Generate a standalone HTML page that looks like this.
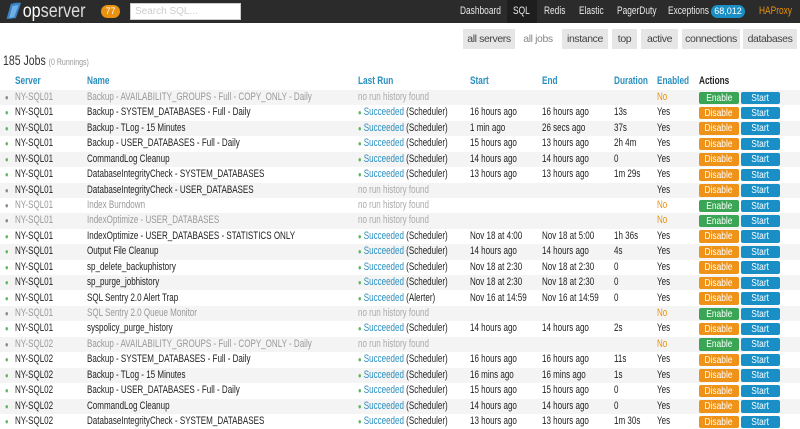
<!DOCTYPE html>
<html><head><meta charset="utf-8"><style>
*{margin:0;padding:0;box-sizing:border-box}
body{width:800px;height:429px;overflow:hidden;background:#fff;font-family:"Liberation Sans",sans-serif;font-size:11px;color:#222;position:relative}
.top{position:absolute;left:0;top:0;width:800px;height:23px;background:#2b2b2b}
.logo{position:absolute;left:4px;top:1px;font-size:19px;color:#dcdcdc;line-height:21px;transform:scaleX(.85);transform-origin:0 0;white-space:nowrap}
.logo b{font-weight:normal;color:#fff}
.badge{position:absolute;left:101px;top:5px;width:19px;height:13px;border-radius:7px;background:#e8920f;color:#fff;font-size:9px;text-align:center;line-height:13px}
.search{position:absolute;left:130px;top:3px;width:111px;height:17px;background:#fff;border:1px solid #ccc;color:#ccc;font-size:10px;padding-left:4px;line-height:15px}
.nav{position:absolute;top:0;height:23px;line-height:23px;color:#e8e8e8;font-size:11px;white-space:nowrap}
.nav i{font-style:normal;display:inline-block;transform:scaleX(.76);transform-origin:0 0}
.sub{position:absolute;top:29px;height:20px;line-height:20px;background:#e6e6e6;color:#444;font-size:10.5px;text-align:center;white-space:nowrap;letter-spacing:-0.4px}
h1{position:absolute;left:3px;top:53px;font-size:13.5px;font-weight:normal;color:#333;transform:scaleX(.78);transform-origin:0 0;white-space:nowrap}
h1 span{font-size:9px;color:#999}
.hd{position:absolute;top:75px;font-weight:bold;color:#2a8fc0;font-size:11px;transform:scaleX(.75);transform-origin:0 0;white-space:nowrap}
.r{position:absolute;left:0;width:800px;height:15.4px;line-height:15.4px;white-space:nowrap}
.g{background:#f4f4f4}
.r span{position:absolute;transform:scaleX(.73);transform-origin:0 0}
.d{left:5px;font-size:8px;color:#888}
.ok{color:#5cb85c}
.s{left:15px}.n{left:87px}.l{left:358px}.st{left:470px}.e{left:542px}.du{left:614px}.en{left:657px}
.dim{color:#999}
.suc{color:#2a8fc0}
.nh{color:#aaa}
.no{color:#e8920f}
.r span.b{top:1.5px;height:12.5px;line-height:12.5px;color:#fff;text-align:center;border-radius:2px;font-size:10.5px;transform:none}
.b i{display:inline-block;transform:scaleX(.8)}
.b1{left:699px;width:40px}
.b2{left:741px;width:39px;background:#1a8fc6}
.dis{background:#ef9318}.ena{background:#3aa655}
.r i{font-style:normal}
</style></head><body>
<div class="top">
<div class="logo"><svg width="22" height="18" viewBox="0 0 22 18" style="vertical-align:-3px"><path d="M3 17 L8 2 Q14 0 20 1 L14 16 Q8 17 3 17Z" fill="#3b82c4"/><path d="M6 16 L10 4 L17 3 L12 15Z" fill="#6fb0e6"/></svg><b>op</b>server</div>
<div class="badge">77</div>
<div class="search">Search SQL...</div>
<div class="nav" style="left:460px"><i>Dashboard</i></div>
<div class="nav" style="left:507px;width:30px;background:#1e1e1e;padding-left:6px"><i>SQL</i></div>
<div class="nav" style="left:544px"><i>Redis</i></div>
<div class="nav" style="left:579px"><i>Elastic</i></div>
<div class="nav" style="left:617px"><i>PagerDuty</i></div>
<div class="nav" style="left:668px"><i>Exceptions</i></div>
<div style="position:absolute;left:711px;top:5px;width:34px;height:13px;border-radius:7px;background:#1a8fc6;color:#fff;font-size:9px;text-align:center;line-height:13px">68,012</div>
<div class="nav" style="left:759px;color:#e8920f"><i>HAProxy</i></div>
</div>
<div class="sub" style="left:463px;width:52px">all servers</div>
<div class="sub" style="left:519px;width:38px;background:#fff;color:#888">all jobs</div>
<div class="sub" style="left:562px;width:46px">instance</div>
<div class="sub" style="left:612px;width:25px">top</div>
<div class="sub" style="left:641px;width:37px">active</div>
<div class="sub" style="left:682px;width:58px">connections</div>
<div class="sub" style="left:743px;width:54px">databases</div>
<h1>185 Jobs <span>(0 Runnings)</span></h1>
<div class="hd" style="left:15px">Server</div>
<div class="hd" style="left:87px">Name</div>
<div class="hd" style="left:358px">Last Run</div>
<div class="hd" style="left:470px">Start</div>
<div class="hd" style="left:542px">End</div>
<div class="hd" style="left:614px">Duration</div>
<div class="hd" style="left:657px">Enabled</div>
<div class="hd" style="left:699px;color:#222">Actions</div>

<div class="r g dim" style="top:90px"><span class="d">●</span><span class="s">NY-SQL01</span><span class="n">Backup - AVAILABILITY_GROUPS - Full - COPY_ONLY - Daily</span><span class="l nh">no run history found</span><span class="en no">No</span><span class="b b1 ena"><i>Enable</i></span><span class="b b2"><i>Start</i></span></div>
<div class="r" style="top:105.4px"><span class="d ok">●</span><span class="s">NY-SQL01</span><span class="n">Backup - SYSTEM_DATABASES - Full - Daily</span><span class="l"><i class="ok" style="font-size:8px">●</i> <i class="suc">Succeeded</i> (Scheduler)</span><span class="st">16 hours ago</span><span class="e">16 hours ago</span><span class="du">13s</span><span class="en">Yes</span><span class="b b1 dis"><i>Disable</i></span><span class="b b2"><i>Start</i></span></div>
<div class="r g" style="top:120.9px"><span class="d ok">●</span><span class="s">NY-SQL01</span><span class="n">Backup - TLog - 15 Minutes</span><span class="l"><i class="ok" style="font-size:8px">●</i> <i class="suc">Succeeded</i> (Scheduler)</span><span class="st">1 min ago</span><span class="e">26 secs ago</span><span class="du">37s</span><span class="en">Yes</span><span class="b b1 dis"><i>Disable</i></span><span class="b b2"><i>Start</i></span></div>
<div class="r" style="top:136.3px"><span class="d ok">●</span><span class="s">NY-SQL01</span><span class="n">Backup - USER_DATABASES - Full - Daily</span><span class="l"><i class="ok" style="font-size:8px">●</i> <i class="suc">Succeeded</i> (Scheduler)</span><span class="st">15 hours ago</span><span class="e">13 hours ago</span><span class="du">2h 4m</span><span class="en">Yes</span><span class="b b1 dis"><i>Disable</i></span><span class="b b2"><i>Start</i></span></div>
<div class="r g" style="top:151.7px"><span class="d ok">●</span><span class="s">NY-SQL01</span><span class="n">CommandLog Cleanup</span><span class="l"><i class="ok" style="font-size:8px">●</i> <i class="suc">Succeeded</i> (Scheduler)</span><span class="st">14 hours ago</span><span class="e">14 hours ago</span><span class="du">0</span><span class="en">Yes</span><span class="b b1 dis"><i>Disable</i></span><span class="b b2"><i>Start</i></span></div>
<div class="r" style="top:167.1px"><span class="d ok">●</span><span class="s">NY-SQL01</span><span class="n">DatabaseIntegrityCheck - SYSTEM_DATABASES</span><span class="l"><i class="ok" style="font-size:8px">●</i> <i class="suc">Succeeded</i> (Scheduler)</span><span class="st">13 hours ago</span><span class="e">13 hours ago</span><span class="du">1m 29s</span><span class="en">Yes</span><span class="b b1 dis"><i>Disable</i></span><span class="b b2"><i>Start</i></span></div>
<div class="r g" style="top:182.6px"><span class="d">●</span><span class="s">NY-SQL01</span><span class="n">DatabaseIntegrityCheck - USER_DATABASES</span><span class="l nh">no run history found</span><span class="en">Yes</span><span class="b b1 dis"><i>Disable</i></span><span class="b b2"><i>Start</i></span></div>
<div class="r dim" style="top:198px"><span class="d">●</span><span class="s">NY-SQL01</span><span class="n">Index Burndown</span><span class="l nh">no run history found</span><span class="en no">No</span><span class="b b1 ena"><i>Enable</i></span><span class="b b2"><i>Start</i></span></div>
<div class="r g dim" style="top:213.4px"><span class="d">●</span><span class="s">NY-SQL01</span><span class="n">IndexOptimize - USER_DATABASES</span><span class="l nh">no run history found</span><span class="en no">No</span><span class="b b1 ena"><i>Enable</i></span><span class="b b2"><i>Start</i></span></div>
<div class="r" style="top:228.9px"><span class="d ok">●</span><span class="s">NY-SQL01</span><span class="n">IndexOptimize - USER_DATABASES - STATISTICS ONLY</span><span class="l"><i class="ok" style="font-size:8px">●</i> <i class="suc">Succeeded</i> (Scheduler)</span><span class="st">Nov 18 at 4:00</span><span class="e">Nov 18 at 5:00</span><span class="du">1h 36s</span><span class="en">Yes</span><span class="b b1 dis"><i>Disable</i></span><span class="b b2"><i>Start</i></span></div>
<div class="r g" style="top:244.3px"><span class="d ok">●</span><span class="s">NY-SQL01</span><span class="n">Output File Cleanup</span><span class="l"><i class="ok" style="font-size:8px">●</i> <i class="suc">Succeeded</i> (Scheduler)</span><span class="st">14 hours ago</span><span class="e">14 hours ago</span><span class="du">4s</span><span class="en">Yes</span><span class="b b1 dis"><i>Disable</i></span><span class="b b2"><i>Start</i></span></div>
<div class="r" style="top:259.7px"><span class="d ok">●</span><span class="s">NY-SQL01</span><span class="n">sp_delete_backuphistory</span><span class="l"><i class="ok" style="font-size:8px">●</i> <i class="suc">Succeeded</i> (Scheduler)</span><span class="st">Nov 18 at 2:30</span><span class="e">Nov 18 at 2:30</span><span class="du">0</span><span class="en">Yes</span><span class="b b1 dis"><i>Disable</i></span><span class="b b2"><i>Start</i></span></div>
<div class="r g" style="top:275.1px"><span class="d ok">●</span><span class="s">NY-SQL01</span><span class="n">sp_purge_jobhistory</span><span class="l"><i class="ok" style="font-size:8px">●</i> <i class="suc">Succeeded</i> (Scheduler)</span><span class="st">Nov 18 at 2:30</span><span class="e">Nov 18 at 2:30</span><span class="du">0</span><span class="en">Yes</span><span class="b b1 dis"><i>Disable</i></span><span class="b b2"><i>Start</i></span></div>
<div class="r" style="top:290.6px"><span class="d ok">●</span><span class="s">NY-SQL01</span><span class="n">SQL Sentry 2.0 Alert Trap</span><span class="l"><i class="ok" style="font-size:8px">●</i> <i class="suc">Succeeded</i> (Alerter)</span><span class="st">Nov 16 at 14:59</span><span class="e">Nov 16 at 14:59</span><span class="du">0</span><span class="en">Yes</span><span class="b b1 dis"><i>Disable</i></span><span class="b b2"><i>Start</i></span></div>
<div class="r g dim" style="top:306px"><span class="d">●</span><span class="s">NY-SQL01</span><span class="n">SQL Sentry 2.0 Queue Monitor</span><span class="l nh">no run history found</span><span class="en no">No</span><span class="b b1 ena"><i>Enable</i></span><span class="b b2"><i>Start</i></span></div>
<div class="r" style="top:321.4px"><span class="d ok">●</span><span class="s">NY-SQL01</span><span class="n">syspolicy_purge_history</span><span class="l"><i class="ok" style="font-size:8px">●</i> <i class="suc">Succeeded</i> (Scheduler)</span><span class="st">14 hours ago</span><span class="e">14 hours ago</span><span class="du">2s</span><span class="en">Yes</span><span class="b b1 dis"><i>Disable</i></span><span class="b b2"><i>Start</i></span></div>
<div class="r g dim" style="top:336.9px"><span class="d">●</span><span class="s">NY-SQL02</span><span class="n">Backup - AVAILABILITY_GROUPS - Full - COPY_ONLY - Daily</span><span class="l nh">no run history found</span><span class="en no">No</span><span class="b b1 ena"><i>Enable</i></span><span class="b b2"><i>Start</i></span></div>
<div class="r" style="top:352.3px"><span class="d ok">●</span><span class="s">NY-SQL02</span><span class="n">Backup - SYSTEM_DATABASES - Full - Daily</span><span class="l"><i class="ok" style="font-size:8px">●</i> <i class="suc">Succeeded</i> (Scheduler)</span><span class="st">16 hours ago</span><span class="e">16 hours ago</span><span class="du">11s</span><span class="en">Yes</span><span class="b b1 dis"><i>Disable</i></span><span class="b b2"><i>Start</i></span></div>
<div class="r g" style="top:367.7px"><span class="d ok">●</span><span class="s">NY-SQL02</span><span class="n">Backup - TLog - 15 Minutes</span><span class="l"><i class="ok" style="font-size:8px">●</i> <i class="suc">Succeeded</i> (Scheduler)</span><span class="st">16 mins ago</span><span class="e">16 mins ago</span><span class="du">1s</span><span class="en">Yes</span><span class="b b1 dis"><i>Disable</i></span><span class="b b2"><i>Start</i></span></div>
<div class="r" style="top:383.1px"><span class="d ok">●</span><span class="s">NY-SQL02</span><span class="n">Backup - USER_DATABASES - Full - Daily</span><span class="l"><i class="ok" style="font-size:8px">●</i> <i class="suc">Succeeded</i> (Scheduler)</span><span class="st">15 hours ago</span><span class="e">15 hours ago</span><span class="du">0</span><span class="en">Yes</span><span class="b b1 dis"><i>Disable</i></span><span class="b b2"><i>Start</i></span></div>
<div class="r g" style="top:398.6px"><span class="d ok">●</span><span class="s">NY-SQL02</span><span class="n">CommandLog Cleanup</span><span class="l"><i class="ok" style="font-size:8px">●</i> <i class="suc">Succeeded</i> (Scheduler)</span><span class="st">14 hours ago</span><span class="e">14 hours ago</span><span class="du">0</span><span class="en">Yes</span><span class="b b1 dis"><i>Disable</i></span><span class="b b2"><i>Start</i></span></div>
<div class="r" style="top:414px"><span class="d ok">●</span><span class="s">NY-SQL02</span><span class="n">DatabaseIntegrityCheck - SYSTEM_DATABASES</span><span class="l"><i class="ok" style="font-size:8px">●</i> <i class="suc">Succeeded</i> (Scheduler)</span><span class="st">13 hours ago</span><span class="e">13 hours ago</span><span class="du">1m 30s</span><span class="en">Yes</span><span class="b b1 dis"><i>Disable</i></span><span class="b b2"><i>Start</i></span></div>
</body></html>
